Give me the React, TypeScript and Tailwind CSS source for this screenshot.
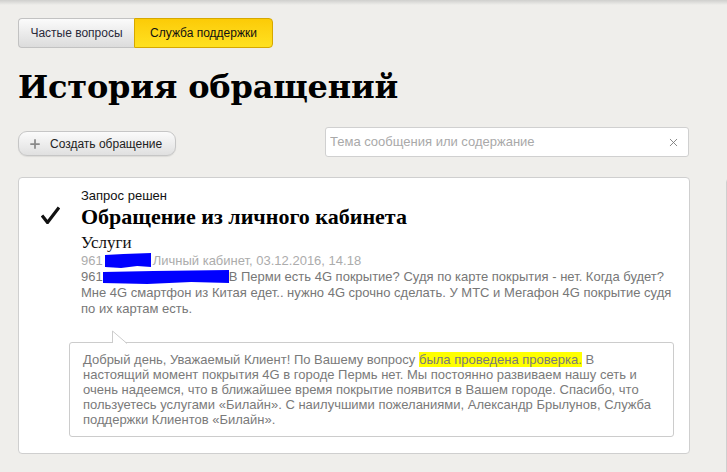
import { Plus, X } from 'lucide-react'

const sans = { fontFamily: '"Liberation Sans", Arial, sans-serif' }

function Check() {
  return (
    <svg width="19" height="18" viewBox="0 0 19 18" className="mt-[18px] shrink-0">
      <path d="M1 9.5 L6.5 16.5 L18 1.5" fill="none" stroke="#111" strokeWidth="3.2" strokeLinejoin="miter" />
    </svg>
  )
}

function Scribble({ w, h }: { w: number; h: number }) {
  return (
    <svg width={w} height={h} viewBox={`0 0 ${w} ${h}`} className="inline-block align-[-3px]">
      <path
        d={`M0 2 L${w * 0.4} 1 L${w} 0 L${w} ${h - 1} L${w * 0.7} ${h - 2} L${w * 0.35} ${h} L0 ${h - 1} Z`}
        fill="#0000ff"
      />
    </svg>
  )
}

export default function App() {
  return (
    <div className="min-h-[472px] h-[472px] overflow-hidden bg-[#efeeeb]" style={sans}>
      <div className="h-[5px] bg-gradient-to-b from-[#cfcfcd] to-[#efeeeb]" />

      <div className="pl-[18px]">
        {/* tabs */}
        <div className="mt-[13px] flex h-[30px] w-[255px] text-[12px]">
          <div className="flex w-[116px] items-center justify-center rounded-l-[4px] border border-r-0 border-[#c2c2c2] bg-gradient-to-b from-[#fbfbfb] to-[#dcdcdc] text-[#2a2a3a]">
            Частые вопросы
          </div>
          <div className="flex flex-1 items-center justify-center rounded-r-[4px] border border-[#d6a800] bg-gradient-to-b from-[#fccb06] to-[#ffe11f] text-[#111]">
            Служба поддержки
          </div>
        </div>

        <h1
          className="mt-[19px] text-[32px] leading-[40px] font-bold text-black tracking-[-0.2px]"
          style={{ fontFamily: '"DejaVu Serif", serif' }}
        >
          История обращений
        </h1>

        {/* actions */}
        <div className="mt-[20px] flex items-start">
          <button className="mt-[4px] flex h-[25px] w-[158px] items-center gap-[8px] rounded-[9px] border border-[#c6c6c6] bg-gradient-to-b from-[#fbfbfb] to-[#e0e0e0] pl-[9px] text-[12px] text-[#222] shadow-[0_1px_1px_rgba(0,0,0,0.08)]">
            <Plus size={14} strokeWidth={3} className="text-[#8a8a8a]" />
            Создать обращение
          </button>
          <div className="ml-[149px] flex h-[30px] w-[364px] items-center rounded-[3px] border border-[#d0d0d0] bg-white pl-[4px] pr-[8px]">
            <input
              className="flex-1 bg-transparent text-[13px] text-[#333] outline-none placeholder:text-[#a9a9a9]"
              style={sans}
              placeholder="Тема сообщения или содержание"
            />
            <X size={13} strokeWidth={1.6} className="text-[#777]" />
          </div>
        </div>

        {/* list */}
        <div className="mt-[20px] flex items-start">
          <div className="flex w-[672px] shrink-0 rounded-[4px] border border-[#cfcfcf] bg-white pb-[16px] pl-[22px] pt-[10px]">
            <Check />
            <div className="ml-[21px] flex-1">
              <div className="text-[13px] leading-[15px] text-[#111]">Запрос решен</div>
              <div
                className="mt-[2px] text-[22px] leading-[24px] font-bold text-black"
                style={{ fontFamily: '"Liberation Serif", serif' }}
              >
                Обращение из личного кабинета
              </div>
              <div
                className="mt-[5px] text-[17px] leading-[18px] text-[#111]"
                style={{ fontFamily: '"Liberation Serif", serif' }}
              >
                Услуги
              </div>
              <div className="mt-[1px] text-[13px] leading-[16px] text-[#acacac]">
                961<span className="ml-[2px]" /><Scribble w={46} h={15} /><span className="ml-[2px]" />Личный кабинет, 03.12.2016, 14.18
              </div>
              <div className="text-[13px] leading-[16px] text-[#777]">
                961<Scribble w={126} h={14} />В Перми есть 4G покрытие? Судя по карте покрытия - нет. Когда будет?
                <br />
                Мне 4G смартфон из Китая едет.. нужно 4G срочно сделать. У МТС и Мегафон 4G покрытие судя
                <br />
                по их картам есть.
              </div>

              {/* reply bubble */}
              <div className="relative -ml-[12px] mt-[25px] w-[605px] rounded-[3px] border border-[#cccccc] bg-white pb-[9px] pl-[13px] pt-[9px] text-[13px] leading-[15px] text-[#7a7a7a]">
                <svg width="16" height="14" viewBox="0 0 16 14" className="absolute left-[42px] top-[-13px]">
                  <path d="M0.5 14 L0.5 1 L15 14 Z" fill="#fff" />
                  <path d="M0.5 13 L0.5 1 L15 13.5" fill="none" stroke="#cccccc" strokeWidth="1" />
                </svg>
                Добрый день, Уважаемый Клиент! По Вашему вопросу{' '}
                <span className="bg-[#ffff00]">была проведена проверка.</span> В
                <br />
                настоящий момент покрытия 4G в городе Пермь нет. Мы постоянно развиваем нашу сеть и
                <br />
                очень надеемся, что в ближайшее время покрытие появится в Вашем городе. Спасибо, что
                <br />
                пользуетесь услугами «Билайн». С наилучшими пожеланиями, Александр Брылунов, Служба
                <br />
                поддержки Клиентов «Билайн».
              </div>
            </div>
          </div>
          <div className="ml-[36px] mt-[1px] h-[300px] w-[200px] shrink-0 rounded-[4px] border border-[#cfcfcf] bg-white" />
        </div>
      </div>
    </div>
  )
}
